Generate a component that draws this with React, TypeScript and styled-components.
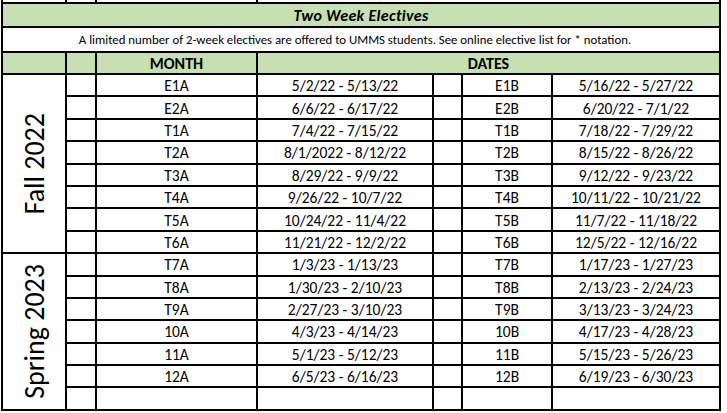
import React from 'react';
import styled, { createGlobalStyle } from 'styled-components';

type Block = { code: string; dates: string };
type Row = [Block, Block] | null;

const fall: Row[] = [
    [{ code: 'E1A', dates: '5/2/22 - 5/13/22' }, { code: 'E1B', dates: '5/16/22 - 5/27/22' }],
    [{ code: 'E2A', dates: '6/6/22 - 6/17/22' }, { code: 'E2B', dates: '6/20/22 - 7/1/22' }],
    [{ code: 'T1A', dates: '7/4/22 - 7/15/22' }, { code: 'T1B', dates: '7/18/22 - 7/29/22' }],
    [{ code: 'T2A', dates: '8/1/2022 - 8/12/22' }, { code: 'T2B', dates: '8/15/22 - 8/26/22' }],
    [{ code: 'T3A', dates: '8/29/22 - 9/9/22' }, { code: 'T3B', dates: '9/12/22 - 9/23/22' }],
    [{ code: 'T4A', dates: '9/26/22 - 10/7/22' }, { code: 'T4B', dates: '10/11/22 - 10/21/22' }],
    [{ code: 'T5A', dates: '10/24/22 - 11/4/22' }, { code: 'T5B', dates: '11/7/22 - 11/18/22' }],
    [{ code: 'T6A', dates: '11/21/22 - 12/2/22' }, { code: 'T6B', dates: '12/5/22 - 12/16/22' }],
];

const spring: Row[] = [
    [{ code: 'T7A', dates: '1/3/23 - 1/13/23' }, { code: 'T7B', dates: '1/17/23 - 1/27/23' }],
    [{ code: 'T8A', dates: '1/30/23 - 2/10/23' }, { code: 'T8B', dates: '2/13/23 - 2/24/23' }],
    [{ code: 'T9A', dates: '2/27/23 - 3/10/23' }, { code: 'T9B', dates: '3/13/23 - 3/24/23' }],
    [{ code: '10A', dates: '4/3/23 - 4/14/23' }, { code: '10B', dates: '4/17/23 - 4/28/23' }],
    [{ code: '11A', dates: '5/1/23 - 5/12/23' }, { code: '11B', dates: '5/15/23 - 5/26/23' }],
    [{ code: '12A', dates: '6/5/23 - 6/16/23' }, { code: '12B', dates: '6/19/23 - 6/30/23' }],
    null,
];

const seasons = [
    { name: 'Fall 2022', rows: fall },
    { name: 'Spring 2023', rows: spring },
];

const App: React.FC = () => {
    return (
        <>
            <GlobalStyle />
            <Sheet>
                {/* tail of the row above, cut off by the screenshot */}
                <Cell />
                <Cell />
                <Cell />
                <Cell $span={4} />

                <Cell $span={7} $green>
                    <Title>Two Week Electives</Title>
                </Cell>
                <Cell $span={7}>
                    <Note>
                        A limited number of 2-week electives are offered to UMMS students. See online elective list for * notation.
                    </Note>
                </Cell>

                <Cell $green />
                <Cell $green />
                <Cell $green>
                    <Heading>MONTH</Heading>
                </Cell>
                <Cell $green $span={4}>
                    <Heading>DATES</Heading>
                </Cell>

                {seasons.map((season) => (
                    <React.Fragment key={season.name}>
                        <Cell $rows={season.rows.length}>
                            <Season>{season.name}</Season>
                        </Cell>
                        {season.rows.map((row, i) => (
                            <React.Fragment key={i}>
                                <Cell />
                                <Cell>{row && <Value>{row[0].code}</Value>}</Cell>
                                <Cell>{row && <Value>{row[0].dates}</Value>}</Cell>
                                <Cell />
                                <Cell>{row && <Value>{row[1].code}</Value>}</Cell>
                                <Cell>{row && <Value>{row[1].dates}</Value>}</Cell>
                            </React.Fragment>
                        ))}
                    </React.Fragment>
                ))}
            </Sheet>
        </>
    );
};
export default App;

const GlobalStyle = createGlobalStyle`
    body {
        margin: 0;
        background: #fff;
        font-family: Carlito, Calibri, Lato, 'Open Sans', sans-serif;
        color: #000;
    }
`;

// black background + 2px gaps draw the spreadsheet grid lines
const Sheet = styled.div`
    display: grid;
    grid-template-columns: 62px 28px 159px 174px 27px 88px 166px;
    grid-template-rows: 2px 22px 23px 20px repeat(15, 20.4px);
    gap: 2px;
    width: fit-content;
    margin-left: 1px;
    padding: 0 2px 2px 2px;
    background: #000;
`;

const Cell = styled.div<{ $span?: number; $rows?: number; $green?: boolean }>`
    grid-column: span ${(p) => p.$span ?? 1};
    grid-row: span ${(p) => p.$rows ?? 1};
    display: flex;
    align-items: center;
    justify-content: center;
    overflow: hidden;
    background: ${(p) => (p.$green ? '#c6e0b4' : '#fff')};
`;

const Title = styled.span`
    font-size: 16px;
    font-weight: 700;
    font-style: italic;
    letter-spacing: 0.3px;
`;

const Note = styled.span`
    font-size: 12.8px;
    white-space: nowrap;
    margin-right: 12px;
`;

const Heading = styled.span`
    font-size: 16px;
    font-weight: 700;
`;

const Value = styled.span`
    font-size: 15.5px;
    white-space: nowrap;
    padding-top: 1px;
`;

const Season = styled.span`
    writing-mode: vertical-rl;
    transform: rotate(180deg);
    font-size: 28px;
    white-space: nowrap;
`;
